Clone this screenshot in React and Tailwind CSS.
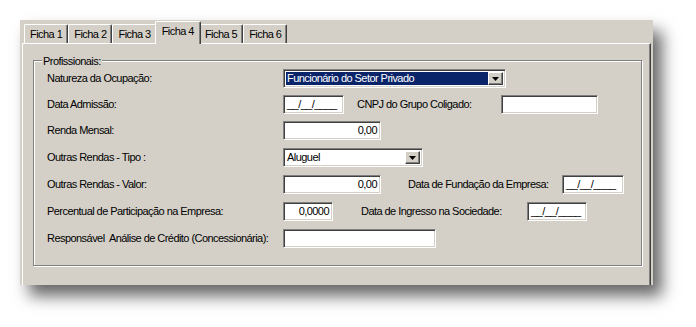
const sunken =
  "bg-white border border-t-[#808080] border-l-[#808080] border-b-white border-r-white shadow-[inset_1px_1px_0_#404040,inset_-1px_-1px_0_#d4d0c8]";

function Field({ w, value, right }) {
  return (
    <div className={`${sunken} h-[19px] ${w} flex items-center px-[3px] ${right ? "justify-end" : ""}`}>
      <span>{value}</span>
    </div>
  );
}

function Select({ w, value, selected }) {
  return (
    <div className={`${sunken} h-[19px] ${w} flex items-center p-[2px]`}>
      <div
        className={`flex-1 h-full flex items-center pl-[1px] ${selected ? "bg-[#0a246a] text-white" : ""}`}
      >
        {value}
      </div>
      <div className="w-[15px] h-full bg-[#d4d0c8] border border-t-white border-l-white border-b-[#404040] border-r-[#404040] shadow-[inset_-1px_-1px_0_#808080] flex items-center justify-center">
        <svg width="7" height="4" viewBox="0 0 7 4">
          <path d="M0 0h7L3.5 4z" fill="#000" />
        </svg>
      </div>
    </div>
  );
}

function Tab({ label, active }) {
  if (active)
    return (
      <div className="relative z-10 -mx-[2px] -mb-px h-[23px] px-[6px] pt-[4px] bg-[#d4d0c8] border-t border-l border-white border-r border-r-[#404040] shadow-[inset_-1px_0_0_#808080] rounded-t-[2px]">
        {label}
      </div>
    );
  return (
    <div className="h-[19px] px-[5px] pt-[4px] border-t border-l border-white border-r border-r-[#404040] shadow-[inset_-1px_0_0_#808080] rounded-t-[2px]">
      {label}
    </div>
  );
}

export default function App() {
  const tabs = ["Ficha 1", "Ficha 2", "Ficha 3", "Ficha 4", "Ficha 5", "Ficha 6"];
  return (
    <div className="w-[696px] h-[327px] bg-white pt-[20px] pl-[20px] font-['Liberation_Sans',Arial,sans-serif] text-[11px] tracking-[-0.55px] text-black leading-none whitespace-nowrap">
      <div className="w-[633px] h-[265px] bg-[#d4d0c8] shadow-[9px_11px_15px_rgba(0,0,0,0.6)] pl-[2px] pr-[2px] pt-[1px] flex flex-col">
        <div className="flex items-end h-[22px] pl-[2px]">
          {tabs.map((t) => (
            <Tab key={t} label={t} active={t === "Ficha 4"} />
          ))}
        </div>
        <div className="flex-1 border-t border-l border-white border-r border-r-[#404040] shadow-[inset_-1px_0_0_#808080] pl-[10px] pr-[8px] pt-[16px]">
          <div className="relative h-[206px] border border-[#808080] shadow-[1px_1px_0_#fff,inset_1px_1px_0_#fff] pl-[13px] pt-[8px]">
            <span className="absolute -top-[5px] left-[8px] px-[1px] bg-[#d4d0c8]">Profissionais:</span>
            <div className="flex flex-col">
              <div className="flex items-center h-[19px]">
                <span className="w-[236px]">Natureza da Ocupação:</span>
                <Select w="w-[223px]" value="Funcionário do Setor Privado" selected />
              </div>
              <div className="flex items-center h-[19px] mt-[7px]">
                <span className="w-[236px]">Data Admissão:</span>
                <Field w="w-[61px]" value="__/__/____" />
                <span className="ml-[13px] w-[144px]">CNPJ do Grupo Coligado:</span>
                <Field w="w-[97px]" value="" />
              </div>
              <div className="flex items-center h-[19px] mt-[7px]">
                <span className="w-[236px]">Renda Mensal:</span>
                <Field w="w-[98px]" value="0,00" right />
              </div>
              <div className="flex items-center h-[19px] mt-[8px]">
                <span className="w-[236px]">Outras Rendas - Tipo :</span>
                <Select w="w-[140px]" value="Aluguel" />
              </div>
              <div className="flex items-center h-[19px] mt-[8px]">
                <span className="w-[236px]">Outras Rendas - Valor:</span>
                <Field w="w-[98px]" value="0,00" right />
                <span className="ml-[27px] w-[154px]">Data de Fundação da Empresa:</span>
                <Field w="w-[62px]" value="__/__/____" />
              </div>
              <div className="flex items-center h-[19px] mt-[8px]">
                <span className="w-[236px]">Percentual de Participação na Empresa:</span>
                <Field w="w-[50px]" value="0,0000" right />
                <span className="ml-[28px] w-[166px]">Data de Ingresso na Sociedade:</span>
                <Field w="w-[60px]" value="__/__/____" />
              </div>
              <div className="flex items-center h-[19px] mt-[8px]">
                <span className="w-[236px]">Responsável&nbsp; Análise de Crédito (Concessionária):</span>
                <Field w="w-[153px]" value="" />
              </div>
            </div>
          </div>
        </div>
      </div>
    </div>
  );
}
